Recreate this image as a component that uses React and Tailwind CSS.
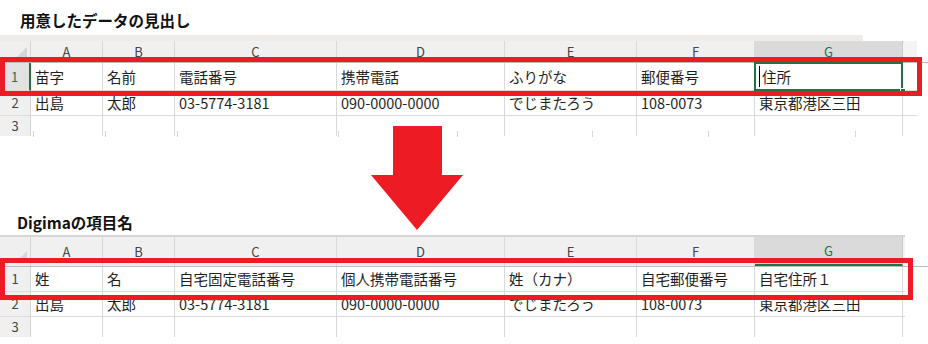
import React from 'react';

const COLS = ['A', 'B', 'C', 'D', 'E', 'F', 'G'];

const TOP_ROW1 = ['苗字', '名前', '電話番号', '携帯電話', 'ふりがな', '郵便番号', '住所'];
const BOTTOM_ROW1 = ['姓', '名', '自宅固定電話番号', '個人携帯電話番号', '姓（カナ）', '自宅郵便番号', '自宅住所１'];
const ROW2 = ['出島', '太郎', '03-5774-3181', '090-0000-0000', 'でじまたろう', '108-0073', '東京都港区三田'];

const GRID_TOP = 'grid grid-cols-[31px_72px_72px_162px_168px_132px_118px_148px_14px]';
const GRID_BOTTOM = 'grid grid-cols-[31px_72px_72px_162px_168px_132px_118px_148px_2px]';

function Corner() {
  return (
    <div className="relative bg-[#efefef] border-r border-[#d4d4d4] flex items-end justify-end pr-[3px] pb-[3px]">
      <svg width="12" height="12" viewBox="0 0 12 12">
        <polygon points="12,0 12,12 0,12" fill="#d6d6d6" />
      </svg>
    </div>
  );
}

function HeaderRow({ grid, height, greenLine }) {
  return (
    <div className={`${grid} ${height} border-b border-[#bcbcbc]`}>
      <Corner />
      {COLS.map(c =>
        c === 'G' ? (
          <div
            key={c}
            className={`flex items-center justify-center bg-[#dadada] text-[#217346] text-[13px] border-r border-[#c8c8c8] ${greenLine ? 'border-b-2 border-b-[#217346]' : ''}`}
          >
            {c}
          </div>
        ) : (
          <div key={c} className="flex items-center justify-center bg-[#f0f0f0] text-[#444] text-[13px] border-r border-[#d9d9d9]">
            {c}
          </div>
        )
      )}
      <div className="bg-[#f4f4f4]" />
    </div>
  );
}

function DataRow({ grid, height, num, cells, numClass = '', selectedLast = false, noBottom = false }) {
  const line = noBottom ? '' : 'border-b';
  return (
    <div className={`${grid} ${height}`}>
      <div className={`flex items-center justify-center text-[13px] text-[#444] bg-[#f0f0f0] border-r border-[#d4d4d4] ${line} border-b-[#dcdcdc] ${numClass}`}>
        {num}
      </div>
      {cells.map((t, i) => {
        const isSel = selectedLast && i === cells.length - 1;
        return (
          <div key={i} className={`relative flex items-center pl-[4px] text-[14.5px] text-[#1f1f1f] whitespace-nowrap border-r border-[#d9d9d9] ${line} ${isSel ? 'pl-[3px]' : ''}`}>
            {isSel && (
              <>
                <span className="absolute -left-px -top-px -right-px -bottom-px border-2 border-[#217346]" />
                <span className="absolute -right-[4px] -bottom-[4px] w-[6px] h-[6px] bg-[#217346] border border-white" />
                <span className="w-px h-[21px] bg-black mr-[2px]" />
              </>
            )}
            {t}
          </div>
        );
      })}
      <div className={`${line} border-[#d9d9d9]`} />
    </div>
  );
}

function Ticks() {
  return (
    <div className="flex h-[6px]">
      <span className="ml-[33px] w-px bg-[#d4d4d4]" />
      <span className="ml-[71px] w-px bg-[#d4d4d4]" />
      <span className="ml-[71px] w-px bg-[#d4d4d4]" />
      <span className="ml-[160px] w-px bg-[#d4d4d4]" />
      <span className="ml-[118px] w-px bg-[#d4d4d4]" />
      <span className="ml-[134px] w-px bg-[#d4d4d4]" />
      <span className="ml-[115px] w-px bg-[#d4d4d4]" />
      <span className="ml-[146px] w-px bg-[#d4d4d4]" />
    </div>
  );
}

function DownArrow() {
  return (
    <svg className="absolute left-[371px] top-[126px]" width="92" height="104" viewBox="0 0 92 104">
      <polygon points="22,0 71,0 71,49 92,49 46,104 0,49 22,49" fill="#ed1c24" />
    </svg>
  );
}

export default function App() {
  return (
    <div className="relative w-[928px] h-[344px] overflow-hidden bg-white font-['Noto_Sans_CJK_JP','Noto_Sans',sans-serif]">
      <div className="h-[35px] pt-[10px] pl-[20px] text-[15.5px] leading-[20px] font-bold text-[#111]">用意したデータの見出し</div>

      <div>
        <div className="w-[863px] h-[6px] bg-[#eeecea]" />
        <HeaderRow grid={GRID_TOP} height="h-[22px]" />
        <DataRow
          grid={GRID_TOP}
          height="h-[28px]"
          num="1"
          cells={TOP_ROW1}
          numClass="!bg-[#e2e2e2] !text-[#2f6f4a] border-r-2 !border-r-[#217346]"
          selectedLast
        />
        <DataRow grid={GRID_TOP} height="h-[25px]" num="2" cells={ROW2} />
        <DataRow grid={GRID_TOP} height="h-[15px]" num="3" cells={['', '', '', '', '', '', '']} noBottom />
        <Ticks />
      </div>

      <div className="h-[71px]" />

      <div className="h-[27px] pt-[4px] pl-[17px] text-[15.5px] leading-[20px] font-bold text-[#111]">Digimaの項目名</div>

      <div>
        <div className="w-[905px] h-[2px] bg-[#d6d6d6]" />
        <HeaderRow grid={GRID_BOTTOM} height="h-[30px]" greenLine />
        <DataRow grid={GRID_BOTTOM} height="h-[25px]" num="1" cells={BOTTOM_ROW1} />
        <DataRow grid={GRID_BOTTOM} height="h-[25px]" num="2" cells={ROW2} />
        <DataRow grid={GRID_BOTTOM} height="h-[15px]" num="3" cells={['', '', '', '', '', '', '']} noBottom />
      </div>

      <div className="absolute left-0 top-[57px] w-[922px] h-[39px] border-[5px] border-[#ed1c24]" />
      <div className="absolute left-0 top-[258px] w-[913px] h-[42px] border-[5px] border-[#ed1c24]" />
      <DownArrow />
    </div>
  );
}
